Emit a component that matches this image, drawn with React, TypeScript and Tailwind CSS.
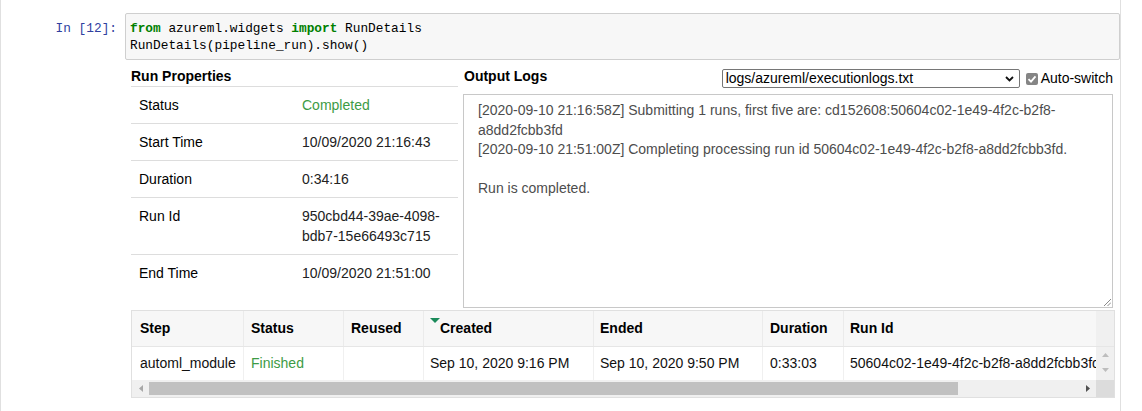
const green = "text-[#3d9b45]";

const props: [string, React.ReactNode][] = [
  ["Status", <span className={green}>Completed</span>],
  ["Start Time", "10/09/2020 21:16:43"],
  ["Duration", "0:34:16"],
  [
    "Run Id",
    <>
      950cbd44-39ae-4098-
      <br />
      bdb7-15e66493c715
    </>,
  ],
  ["End Time", "10/09/2020 21:51:00"],
];

const cols = [
  { head: "Step", cell: "automl_module", w: "w-[112px] pl-[8px]" },
  { head: "Status", cell: <span className={green}>Finished</span>, w: "w-[100px] pl-[7px]" },
  { head: "Reused", cell: "", w: "w-[80px] pl-[7px]" },
  { head: "Created", cell: "Sep 10, 2020 9:16 PM", w: "w-[170px] pl-[6px]", sorted: true },
  { head: "Ended", cell: "Sep 10, 2020 9:50 PM", w: "w-[169px] pl-[6px]" },
  { head: "Duration", cell: "0:33:03", w: "w-[81px] pl-[7px]" },
  { head: "Run Id", cell: "50604c02-1e49-4f2c-b2f8-a8dd2fcbb3fd", w: "w-[400px] pl-[6px]" },
];

function Tri({ dir, color }: { dir: "up" | "down" | "left" | "right"; color: string }) {
  const pts = {
    up: "0,4 7,4 3.5,0",
    down: "0,0 7,0 3.5,4",
    left: "4,0 4,7 0,3.5",
    right: "0,0 0,7 4,3.5",
  }[dir];
  const vert = dir === "up" || dir === "down";
  return (
    <svg width={vert ? 7 : 4} height={vert ? 4 : 7} viewBox={vert ? "0 0 7 4" : "0 0 4 7"}>
      <polygon points={pts} fill={color} />
    </svg>
  );
}

export default function App() {
  return (
    <div className="w-[1142px] h-[411px] bg-white overflow-hidden font-['Liberation_Sans',Arial,sans-serif] text-[14px] text-black">
      <div className="w-[1121px] h-full border-l border-r border-[#e0e0e0] flex">
        <div className="w-[124px] shrink-0 pt-[20px] pr-[8px] text-right font-['Liberation_Mono',monospace] text-[12.8px] leading-[17px] text-[#303f9f]">
          In [12]:
        </div>
        <div className="w-[995px] pt-[13px]">
          {/* code cell */}
          <div className="border border-[#cfcfcf] rounded-[2px] bg-[#f7f7f7] pt-[6px] pb-[5px] px-[4px] font-['Liberation_Mono',monospace] text-[12.8px] leading-[17px] text-black">
            <div>
              <span className="font-bold text-[#008000]">from</span> azureml.widgets{" "}
              <span className="font-bold text-[#008000]">import</span> RunDetails
            </div>
            <div>RunDetails(pipeline_run).show()</div>
          </div>

          {/* widget */}
          <div className="ml-[6px] mt-[6px] w-[984px]">
            <div className="flex gap-[5px]">
              <div className="w-[327px]">
                <div className="h-[21px] leading-[20px] font-bold border-b border-[#dddddd]">Run Properties</div>
                {props.map(([k, v], i) => (
                  <div
                    key={k}
                    className={`flex py-2 leading-[20px] ${i < props.length - 1 ? "border-b border-[#dddddd]" : ""}`}
                  >
                    <div className="w-[171px] pl-[8px] shrink-0">{k}</div>
                    <div className="flex-1 text-[#222]">{v}</div>
                  </div>
                ))}
              </div>

              <div className="w-[652px]">
                <div className="h-[28px] flex justify-between items-start">
                  <div className="pl-[1px] leading-[20px] font-bold">Output Logs</div>
                  <div className="flex items-center mt-[3px] pr-[2px]">
                    <div className="w-[298px] h-[19px] border border-[#767676] rounded-[2px] flex items-center justify-between pl-[3px] pr-[5px] leading-[17px]">
                      <span>logs/azureml/executionlogs.txt</span>
                      <svg width="9" height="6" viewBox="0 0 9 6">
                        <path d="M1 1 L4.5 4.5 L8 1" fill="none" stroke="#111" strokeWidth="1.8" />
                      </svg>
                    </div>
                    <svg className="ml-[6px]" width="12" height="12" viewBox="0 0 12 12">
                      <rect x="0" y="0" width="12" height="12" rx="2" fill="#858585" />
                      <path d="M2.5 6.2 L5 8.7 L9.5 3.3" fill="none" stroke="#fff" strokeWidth="1.8" />
                    </svg>
                    <span className="ml-[3px] leading-[17px]">Auto-switch</span>
                  </div>
                </div>
                <div className="relative w-[650px] h-[214px] border border-[#c8c8c8] pt-[6px] px-[14px] leading-[19.5px] text-[#4d4d4d]">
                  <div>[2020-09-10 21:16:58Z] Submitting 1 runs, first five are: cd152608:50604c02-1e49-4f2c-b2f8-</div>
                  <div>a8dd2fcbb3fd</div>
                  <div>[2020-09-10 21:51:00Z] Completing processing run id 50604c02-1e49-4f2c-b2f8-a8dd2fcbb3fd.</div>
                  <div>&nbsp;</div>
                  <div>Run is completed.</div>
                  <svg className="absolute right-[1px] bottom-[1px]" width="8" height="8" viewBox="0 0 8 8">
                    <path d="M1 8 L8 1 M4.5 8 L8 4.5" stroke="#8a8a8a" strokeWidth="1" />
                  </svg>
                </div>
              </div>
            </div>

            {/* steps table */}
            <div className="mt-[2px] w-[984px] border border-[#e0e0e0] flex">
              <div className="w-[964px] overflow-hidden">
                <div className="flex h-[36px] bg-[#f7f7f7] border-b border-[#e6e6e6] font-bold">
                  {cols.map((c) => (
                    <div
                      key={c.head}
                      className={`${c.w} shrink-0 border-r border-[#ebebeb] flex items-center ${c.sorted ? "items-stretch" : ""}`}
                    >
                      {c.sorted ? (
                        <div className="flex items-start h-full">
                          <svg className="mt-[7px]" width="10" height="5" viewBox="0 0 10 5">
                            <polygon points="0,0 10,0 5,5" fill="#1b8a5a" />
                          </svg>
                          <span className="self-center">{c.head}</span>
                        </div>
                      ) : (
                        c.head
                      )}
                    </div>
                  ))}
                </div>
                <div className="flex h-[33px] bg-white">
                  {cols.map((c) => (
                    <div
                      key={c.head}
                      className={`${c.w} shrink-0 border-r border-[#f0f0f0] flex items-center whitespace-nowrap overflow-hidden text-[#111]`}
                    >
                      {c.cell}
                    </div>
                  ))}
                </div>
                <div className="h-[17px] bg-[#f0f0f0] flex items-center">
                  <div className="w-[17px] flex justify-center">
                    <Tri dir="left" color="#a8a8a8" />
                  </div>
                  <div className="w-[809px] h-[13px] bg-[#c1c1c1]" />
                  <div className="flex-1" />
                  <div className="w-[17px] flex justify-center">
                    <Tri dir="right" color="#505050" />
                  </div>
                </div>
              </div>
              <div className="w-[18px] flex flex-col">
                <div className="h-[36px] bg-[#f0f0f0] border-b border-[#e6e6e6]" />
                <div className="h-[33px] bg-[#f0f0f0] flex flex-col items-center pt-[6px] gap-[11px]">
                  <Tri dir="up" color="#bdbdbd" />
                  <Tri dir="down" color="#bdbdbd" />
                </div>
                <div className="h-[17px] bg-[#dcdcdc]" />
              </div>
            </div>
          </div>
        </div>
      </div>
    </div>
  );
}
